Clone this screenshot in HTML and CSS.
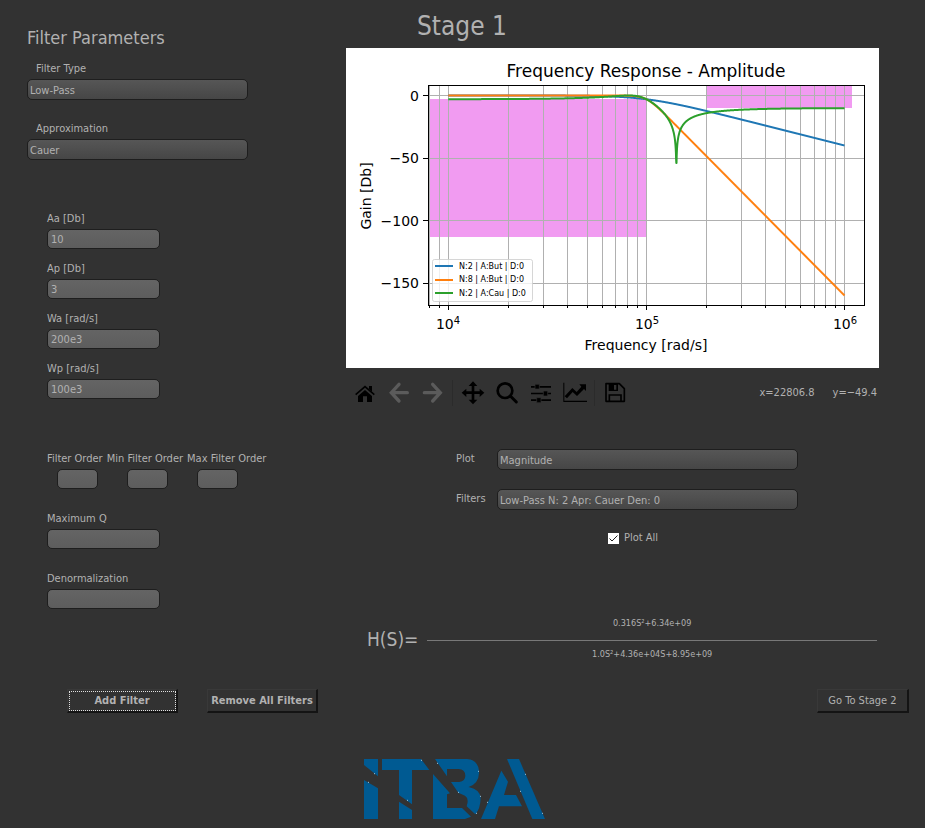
FILE: index.html
```html
<!DOCTYPE html>
<html lang="en">
<head>
<meta charset="utf-8">
<meta name="viewport" content="width=device-width, initial-scale=1">
<title>Filter Tool - Stage 1</title>
<link rel="stylesheet" href="styles.css">
</head>
<body>
<main class="stage">
  <section class="params">
    <h2>Filter Parameters</h2>
    <div class="choices">
      <div class="choice">
        <label for="type">Filter Type</label>
        <select id="type"><option>Low-Pass</option></select>
      </div>
      <div class="choice">
        <label for="approx">Approximation</label>
        <select id="approx"><option>Cauer</option></select>
      </div>
    </div>
    <div class="template">
      <div class="field"><label for="aa">Aa [Db]</label><input id="aa" type="text" value="10"></div>
      <div class="field"><label for="ap">Ap [Db]</label><input id="ap" type="text" value="3"></div>
      <div class="field"><label for="wa">Wa [rad/s]</label><input id="wa" type="text" value="200e3"></div>
      <div class="field"><label for="wp">Wp [rad/s]</label><input id="wp" type="text" value="100e3"></div>
    </div>
    <div class="limits">
      <div class="field">
        <div class="order-labels">
          <label for="order">Filter Order</label>
          <label for="min-order">Min Filter Order</label>
          <label for="max-order">Max Filter Order</label>
        </div>
        <div class="order-inputs">
          <input id="order" type="text">
          <input id="min-order" type="text">
          <input id="max-order" type="text">
        </div>
      </div>
      <div class="field"><label for="max-q">Maximum Q</label><input id="max-q" type="text"></div>
      <div class="field"><label for="denorm">Denormalization</label><input id="denorm" type="text"></div>
    </div>
  </section>

  <section class="results">
    <h1>Stage 1</h1>
    <svg class="chart" viewBox="346 48 533 320" role="img" aria-label="Frequency Response - Amplitude">
      <rect x="346" y="48" width="533" height="320" fill="#fff"/>
      <g class="mask">
        <rect x="429" y="99" width="218" height="138"/>
        <rect x="706" y="86" width="146" height="22"/>
      </g>
      <path class="grid" d="M429.5 86V305M439.5 86V305M448.5 86V305M508.5 86V305M543.5 86V305M567.5 86V305M587.5 86V305M602.5 86V305M615.5 86V305M627.5 86V305M637.5 86V305M646.5 86V305M706.5 86V305M741.5 86V305M765.5 86V305M785.5 86V305M800.5 86V305M814.5 86V305M825.5 86V305M835.5 86V305M844.5 86V305M429 95.5H864M429 158.5H864M429 220.5H864M429 283.5H864"/>
      <path class="tick" d="M448.5 306v4M646.5 306v4M844.5 306v4M428 95.5h-5M428 158.5h-5M428 220.5h-5M428 283.5h-5"/>
      <path class="tick minor" d="M429.5 306v2M439.5 306v2M508.5 306v2M543.5 306v2M567.5 306v2M587.5 306v2M602.5 306v2M615.5 306v2M627.5 306v2M637.5 306v2M706.5 306v2M741.5 306v2M765.5 306v2M785.5 306v2M800.5 306v2M814.5 306v2M825.5 306v2M835.5 306v2"/>
      <path class="curve blue" id="butter2"/>
      <path class="curve orange" id="butter8"/>
      <path class="curve green" id="cauer2"/>
      <rect class="spine" x="428.5" y="85.5" width="436" height="220"/>
      <g class="legend">
        <rect x="432.5" y="259.5" width="100" height="42" rx="2"/>
        <path class="curve blue" d="M435 266H453"/>
        <path class="curve orange" d="M435 280H453"/>
        <path class="curve green" d="M435 293H453"/>
        <text x="459" y="269">N:2 | A:But | D:0</text>
        <text x="459" y="282">N:8 | A:But | D:0</text>
        <text x="459" y="296">N:2 | A:Cau | D:0</text>
      </g>
      <text class="title" x="646" y="77">Frequency Response - Amplitude</text>
      <g class="y-ticks">
        <text x="419" y="101">0</text>
        <text x="419" y="163">−50</text>
        <text x="419" y="226">−100</text>
        <text x="419" y="288">−150</text>
      </g>
      <g class="x-ticks">
        <text x="448" y="329">10<tspan class="power" dy="-5">4</tspan></text>
        <text x="647" y="329">10<tspan class="power" dy="-5">5</tspan></text>
        <text x="845" y="329">10<tspan class="power" dy="-5">6</tspan></text>
        <text x="646" y="350">Frequency [rad/s]</text>
        <text transform="translate(371 196) rotate(-90)">Gain [Db]</text>
      </g>
    </svg>

    <div class="toolbar">
      <button type="button" aria-label="Home"><svg viewBox="21 21 72 72"><path d="M57 48L78 66V84H63V67H51V84H36V66Z"/><path d="M69 36H78V53L69 45Z"/><path d="M29 62L57 38L85 62" fill="none" stroke="#000" stroke-width="5"/></svg></button>
      <button type="button" aria-label="Back" class="off"><svg viewBox="123 21 72 72"><path d="M184 56H139M159 31L136 56L159 81" fill="none" stroke="#5b5b5b" stroke-width="10" stroke-linecap="round"/></svg></button>
      <button type="button" aria-label="Forward" class="off"><svg viewBox="225 21 72 72"><path d="M235 56H280M260 31L283 56L260 81" fill="none" stroke="#5b5b5b" stroke-width="10" stroke-linecap="round"/></svg></button>
      <span class="separator"></span>
      <button type="button" aria-label="Pan"><svg viewBox="345 21 72 72"><path d="M381 22L394 36H385V52H401V44L415 56L401 69V60H385V77H394L381 91L368 77H377V60H361V69L347 56L361 44V52H377V36H368Z"/></svg></button>
      <button type="button" aria-label="Zoom"><svg viewBox="447 21 72 72"><circle cx="477" cy="50" r="22" fill="none" stroke="#000" stroke-width="8"/><path d="M493 66L511 84" stroke="#000" stroke-width="9" stroke-linecap="round"/></svg></button>
      <button type="button" aria-label="Subplots"><svg viewBox="549 21 72 72"><path d="M555 36H615V41H555ZM555 56H615V61H555ZM555 76H615V81H555Z"/><path d="M567 31H580V45H567ZM592 51H605V66H592ZM572 71H585V86H572Z" stroke="#323232" stroke-width="2"/></svg></button>
      <button type="button" aria-label="Customize"><svg viewBox="651 21 72 72"><path d="M652 26H655V80H723V84H652Z"/><path d="M700 31H720V51L714 45L693 66L680 54L663 73L656 67L679 42L692 54L706 38Z"/></svg></button>
      <span class="separator"></span>
      <button type="button" aria-label="Save"><svg viewBox="771 21 72 72"><path d="M780 29H820L835 44V82H780Z" fill="none" stroke="#000" stroke-width="5" stroke-linejoin="round"/><path d="M788 29H816V51H788ZM804 33V47H811V33Z" fill-rule="evenodd"/><path d="M790 82V63H825V82" fill="none" stroke="#000" stroke-width="5"/></svg></button>
      <output class="cursor"><span>x=22806.8</span><span>y=−49.4</span></output>
    </div>

    <div class="plot-options">
      <label for="plot">Plot</label>
      <select id="plot"><option>Magnitude</option></select>
      <label for="filters">Filters</label>
      <select id="filters"><option>Low-Pass N: 2 Apr: Cauer Den: 0</option></select>
    </div>
    <label class="plot-all"><span class="tickbox"><input type="checkbox" checked><svg viewBox="0 0 11 11"><path d="M1.500 5.500L4 8L9.500 2.500"/></svg></span>Plot All</label>

    <div class="transfer">
      <span class="lhs">H(S)=</span>
      <div class="fraction">
        <span>0.316S²+6.34e+09</span>
        <span>1.0S²+4.36e+04S+8.95e+09</span>
      </div>
    </div>
  </section>
</main>

<div class="actions">
  <button type="button" class="action strong focused">Add Filter</button>
  <button type="button" class="action strong">Remove All Filters</button>
  <button type="button" class="action next">Go To Stage 2</button>
</div>

<footer>
  <svg class="logo" viewBox="42 42 543 180" role="img" aria-label="ITBA">
    <g fill="#005a92">
      <path d="M42 42H84V94L42 60Z"/>
      <path d="M42 105L84 130V222H42Z"/>
      <path d="M96 42H213L238 75H186V178L147 150V75H96Z"/>
      <path d="M147 170L186 195V222H147Z"/>
      <path d="M249 87L300 145L291 148V189H336L363 215L345 222H249Z"/>
      <path d="M255 42H352Q387 46 387 84Q386 116 356 126Q392 134 392 160Q391 192 376 208L350 184Q358 160 345 152L325 143L303 111H328Q346 108 346 92Q345 72 326 72H291V94Z"/>
      <path d="M471 42H507L585 222H547Z"/>
      <path d="M454 77L474 110L462 150H498L516 184H447L435 222H393Z"/>
    </g>
    <path class="specks" d="M213 46h3M72 86h3M54 112h3M171 166h3M261 55h3M384 79h3M324 142h3M390 154h3M378 205h3M411 172h3M510 139h3M525 88h3M576 205h3"/>
  </svg>
</footer>
<script src="chart.js"></script>
</body>
</html>
```
FILE: styles.css
```css
* {
  box-sizing: border-box;
}

body {
  margin: 0;
  background: #323232;
  color: #b1b1b1;
  font: 11px/20px "DejaVu Sans Condensed", "Noto Sans", sans-serif;
}

button,
input,
select {
  font: inherit;
  color: inherit;
}

h1,
h2 {
  margin: 0;
  font-weight: 400;
}

label {
  display: block;
}

.stage {
  display: grid;
  grid-template-columns: 319px 1fr;
  padding: 0 46px 0 27px;
}

/* Left column */
.params {
  padding-top: 28px;
}

.params label {
  height: 20px;
  line-height: 22px;
}

h2 {
  font-size: 18px;
  margin-bottom: 10px;
}

.choices {
  display: grid;
  gap: 18px;
  width: 221px;
}

.choice,
.field {
  display: grid;
  gap: 1px;
}

.choice label {
  padding-left: 9px;
}

select {
  appearance: none;
  width: 100%;
  height: 21px;
  padding: 1px 2px 0;
  border: 1px solid #1e1e1e;
  border-radius: 5px;
  background: linear-gradient(#565656, #464646);
}

input[type="text"] {
  width: 113px;
  height: 20px;
  padding: 2px 3px 0;
  border: 1px solid #1e1e1e;
  border-radius: 5px;
  background: linear-gradient(#646464, #5d5d5d);
}

.template,
.limits {
  display: grid;
  padding-left: 20px;
}

.template {
  gap: 9px;
  margin-top: 48px;
}

.limits {
  gap: 19px;
  margin-top: 49px;
}

.order-labels {
  display: flex;
  gap: 4px;
  white-space: nowrap;
}

.order-inputs {
  display: flex;
  gap: 29px;
  padding-left: 10px;
}

.order-inputs input[type="text"] {
  width: 41px;
}

/* Right column */
h1 {
  height: 48px;
  padding-left: 71px;
  font-size: 26px;
  line-height: 52px;
}

.chart {
  display: block;
  width: 100%;
  font-family: "DejaVu Sans", sans-serif;
  font-size: 14px;
}

.mask {
  fill: #f19bf1;
}

.grid,
.tick,
.spine {
  fill: none;
  stroke: #b0b0b0;
  shape-rendering: crispEdges;
}

.tick,
.spine {
  stroke: #000;
}

.curve {
  fill: none;
  stroke-width: 2;
  stroke-linejoin: round;
}

.blue { stroke: #1f77b4; }
.orange { stroke: #ff7f0e; }
.green { stroke: #2ca02c; }

.legend {
  font-size: 8px;
}

.legend rect {
  fill: #fff;
  fill-opacity: 0.8;
  stroke: #ccc;
  stroke-opacity: 0.8;
}

.title {
  font-size: 17px;
  text-anchor: middle;
}

.y-ticks {
  text-anchor: end;
}

.x-ticks {
  text-anchor: middle;
}

.power {
  font-size: 10px;
}

.toolbar {
  display: flex;
  align-items: center;
  margin-top: 8px;
  padding: 0 2px;
}

.toolbar button {
  width: 34px;
  height: 34px;
  padding: 5px;
  border: 0;
  background: none;
}

.toolbar svg {
  display: block;
  width: 24px;
  height: 24px;
}

.separator {
  width: 1px;
  height: 26px;
  margin: 0 3px 0 2px;
  background: #2b2b2b;
}

.cursor {
  display: flex;
  gap: 18px;
  margin-left: auto;
}

.plot-options {
  display: grid;
  grid-template-columns: 41px 301px;
  gap: 19px 0;
  align-items: start;
  margin-top: 39px;
  padding-left: 110px;
}

.plot-all {
  display: flex;
  align-items: center;
  gap: 5px;
  margin-top: 18px;
  padding-left: 262px;
}

.tickbox {
  display: grid;
  width: 11px;
  height: 11px;
}

.tickbox input,
.tickbox svg {
  grid-area: 1 / 1;
  width: 11px;
  height: 11px;
  margin: 0;
}

.tickbox input {
  appearance: none;
  background: #fff;
}

.tickbox svg {
  fill: none;
  stroke: #222;
  pointer-events: none;
}

.tickbox input:not(:checked) + svg {
  visibility: hidden;
}

.transfer {
  display: flex;
  align-items: center;
  gap: 9px;
  margin-top: 65px;
  padding: 0 2px 0 21px;
}

.lhs {
  font-size: 19px;
}

.fraction {
  flex: 1;
  font-size: 9px;
  text-align: center;
}

.fraction span {
  display: block;
  padding-bottom: 7px;
}

.fraction span + span {
  padding: 3px 0 0;
  border-top: 1px solid #787878;
}

/* Bottom */
.actions {
  display: flex;
  gap: 29px;
  margin-top: 25px;
  padding: 0 16px 0 67px;
}

.action {
  min-width: 92px;
  height: 24px;
  padding: 0;
  border: 1px solid #393939;
  border-right: 2px solid #141414;
  border-bottom: 2px solid #141414;
  background: #323232;
}

.strong {
  width: 111px;
  font-weight: 700;
}

.focused {
  outline: 1px dotted #e0e0e0;
  outline-offset: -3px;
}

.next {
  margin-left: auto;
}

footer {
  margin-top: 46px;
  padding: 0 17px 9px 0;
  text-align: center;
}

.logo {
  display: inline-block;
  width: 181px;
  height: 60px;
  vertical-align: top;
}

.specks {
  stroke: #9cc4dc;
  stroke-width: 3;
}
```
FILE: chart.js
```js
// Gain in dB for each filter, as a function of angular frequency.
const filters = {
  butter2: w => -10 * Math.log10(1 + (w / 1e5) ** 4),
  butter8: w => -10 * Math.log10(1 + (w / 1e5) ** 16),
  cauer2: w => {
    const num = Math.abs(6.34e9 - 0.316 * w * w);
    const den = Math.hypot(8.95e9 - w * w, 4.36e4 * w);
    return Math.max(-54, 20 * Math.log10(num / den));
  }
};

for (const [id, gain] of Object.entries(filters)) {
  const points = [];
  for (let i = 0; i <= 2000; i++) {
    const decade = i / 1000;
    const x = 448.3 + 198.1 * decade;
    const y = 95.5 - 1.25 * gain(10 ** (4 + decade));
    points.push(x.toFixed(2) + " " + y.toFixed(2));
  }
  document.getElementById(id).setAttribute("d", "M" + points.join("L"));
}
```
